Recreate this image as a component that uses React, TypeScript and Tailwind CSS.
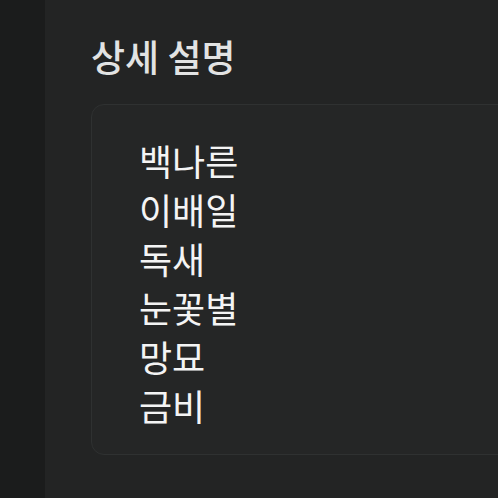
const names = ["백나른", "이배일", "독새", "눈꽃별", "망묘", "금비"];

export default function App() {
  return (
    <div
      className="flex h-[498px] w-[498px] overflow-hidden bg-[#232424]"
      style={{ fontFamily: '"Noto Sans CJK KR", "Noto Sans", sans-serif' }}
    >
      <aside className="w-[45px] shrink-0 bg-[#1b1c1c]" />
      <main className="flex-1 pl-[46px] pt-[33px]">
        <h2 className="text-[37px] font-medium leading-[46px] text-[#e2e3e3]">상세 설명</h2>
        <div className="mt-[25px] -mr-[40px] rounded-l-[13px] border border-[#2f3131] bg-[#252626] pb-[24px] pl-[47px] pt-[31px]">
          <ul className="flex flex-col">
            {names.map((n) => (
              <li key={n} className="text-[36px] leading-[49px] text-[#f4f4f4]">
                {n}
              </li>
            ))}
          </ul>
        </div>
      </main>
    </div>
  );
}
